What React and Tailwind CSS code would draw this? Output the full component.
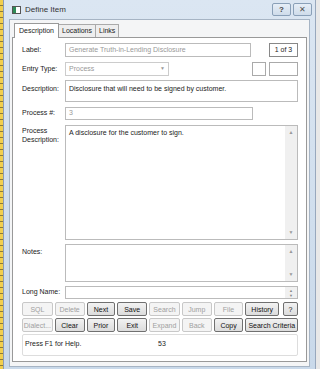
import React from "react";

const font = { fontFamily: '"Liberation Sans", Arial, sans-serif' };

function Btn({ children, enabled, w }) {
  return (
    <div
      className={`h-[14px] flex items-center justify-center border text-[7px] leading-none whitespace-nowrap rounded-[2px] ${
        enabled
          ? "border-[#707070] bg-[linear-gradient(#f2f2f2,#dcdcdc)] text-[#111]"
          : "border-[#c8c8c8] bg-[#f4f4f4] text-[#a0a0a0]"
      } ${w}`}
    >
      {children}
    </div>
  );
}

function ScrollCol({ h }) {
  return (
    <div className={`w-[12px] bg-[#f0f0f0] flex flex-col justify-between items-center text-[5px] text-[#999] py-[3px] ${h}`}>
      <span>▲</span>
      <span>▼</span>
    </div>
  );
}

export default function App() {
  return (
    <div className="w-[320px] h-[369px] flex bg-white overflow-hidden text-[7px] text-[#222] whitespace-nowrap" style={font}>
      <div className="w-[3px] h-full bg-[repeating-linear-gradient(#f2cf4e_0px,#f2cf4e_5px,#8a7a3a_5px,#8a7a3a_6px)]" />
      <div className="w-[313px] h-full flex flex-col bg-[linear-gradient(#dbe6f2,#c9d9ea)] border-l border-[#8c9bb0] border-r border-r-[#98a8bd]">
        {/* Title bar */}
        <div className="h-[19px] flex items-center pl-[8px] pr-[3px] shrink-0">
          <div className="w-[9px] h-[8px] border border-[#555] bg-white flex mr-[4px]">
            <div className="w-[3px] h-full bg-[#2e8b57]" />
          </div>
          <span className="text-[8px] text-[#333]">Define Item</span>
          <div className="ml-auto flex gap-[2px]">
            <div className="w-[19px] h-[13px] border border-[#8aa0b8] rounded-[2px] bg-[linear-gradient(#e6eef7,#cfdcea)] flex items-center justify-center text-[8px] text-[#444] font-bold">?</div>
            <div className="w-[19px] h-[13px] border border-[#8aa0b8] rounded-[2px] bg-[linear-gradient(#e6eef7,#cfdcea)] flex items-center justify-center text-[8px] text-[#555]">✕</div>
          </div>
        </div>
        {/* Client area */}
        <div className="flex-1 mx-[5px] mb-[6px] bg-[#f4f5f6] border border-[#a6b4c4] flex flex-col px-[2px] pt-[2px]">
          {/* Tabs */}
          <div className="flex items-end h-[15px] pl-[2px]">
            <div className="h-[15px] px-[4px] bg-white border border-[#999] border-b-0 flex items-center relative z-10 -mb-px">Description</div>
            <div className="h-[13px] px-[3px] bg-[#eeeeee] border border-[#aaa] border-l-0 border-b-0 flex items-center">Locations</div>
            <div className="h-[13px] px-[3px] bg-[#eeeeee] border border-[#aaa] border-l-0 border-b-0 flex items-center">Links</div>
          </div>
          <div className="flex-1 bg-white border border-[#999] mb-[4px] flex flex-col pl-[9px] pr-[8px] pt-[5px]">
            {/* Label */}
            <div className="flex items-center h-[14px]">
              <span className="w-[43px]">Label:</span>
              <div className="w-[186px] h-[14px] border border-[#bbb] flex items-center px-[3px] text-[#999]">Generate Truth-in-Lending Disclosure</div>
              <div className="ml-auto w-[29px] h-[14px] border border-[#888] flex items-center justify-center text-[#222]">1 of 3</div>
            </div>
            {/* Entry Type */}
            <div className="flex items-center h-[14px] mt-[5px]">
              <span className="w-[43px]">Entry Type:</span>
              <div className="w-[104px] h-[14px] border border-[#ccc] flex items-center px-[3px] text-[#999]">
                <span>Process</span>
                <span className="ml-auto text-[5px]">▼</span>
              </div>
              <div className="ml-auto w-[14px] h-[14px] border border-[#aaa]" />
              <div className="ml-[3px] w-[29px] h-[14px] border border-[#aaa]" />
            </div>
            {/* Description */}
            <div className="flex items-start mt-[4px]">
              <span className="w-[43px] pt-[4px]">Description:</span>
              <div className="flex-1 h-[22px] border border-[#bbb] px-[3px] pt-[3px]">Disclosure that will need to be signed by customer.</div>
            </div>
            {/* Process # */}
            <div className="flex items-center h-[13px] mt-[5px]">
              <span className="w-[43px]">Process #:</span>
              <div className="w-[188px] h-[13px] border border-[#bbb] flex items-center px-[3px] text-[#999]">3</div>
            </div>
            {/* Process Description */}
            <div className="flex items-start mt-[5px]">
              <span className="w-[43px] leading-[9px] pt-[1px] whitespace-normal">Process Description:</span>
              <div className="flex-1 h-[115px] border border-[#bbb] flex">
                <div className="flex-1 px-[3px] pt-[2px]">A disclosure for the customer to sign.</div>
                <ScrollCol h="h-full" />
              </div>
            </div>
            {/* Notes */}
            <div className="flex items-start mt-[4px]">
              <span className="w-[43px] pt-[3px]">Notes:</span>
              <div className="flex-1 h-[38px] border border-[#bbb] flex">
                <div className="flex-1" />
                <ScrollCol h="h-full" />
              </div>
            </div>
            {/* Long Name */}
            <div className="flex items-center h-[13px] mt-[4px]">
              <span className="w-[43px]">Long Name:</span>
              <div className="flex-1 h-[13px] border border-[#bbb] flex">
                <div className="flex-1" />
                <div className="w-[12px] bg-[#f0f0f0] flex flex-col items-center justify-center text-[4px] text-[#888] leading-[5px]">
                  <span>▲</span>
                  <span>▼</span>
                </div>
              </div>
            </div>
            {/* Buttons */}
            <div className="flex mt-[3px] gap-[2px]">
              <Btn w="w-[31px]">SQL</Btn>
              <Btn w="w-[30px]">Delete</Btn>
              <Btn enabled w="w-[29px]">Next</Btn>
              <Btn enabled w="w-[30px]">Save</Btn>
              <Btn w="w-[31px]">Search</Btn>
              <Btn w="w-[30px]">Jump</Btn>
              <Btn w="w-[30px]">File</Btn>
              <Btn enabled w="w-[34px]">History</Btn>
              <Btn enabled w="w-[15px] ml-[2px]">?</Btn>
            </div>
            <div className="flex mt-[2px] gap-[2px]">
              <Btn w="w-[31px]">Dialect...</Btn>
              <Btn enabled w="w-[30px]">Clear</Btn>
              <Btn enabled w="w-[29px]">Prior</Btn>
              <Btn enabled w="w-[30px]">Exit</Btn>
              <Btn w="w-[31px]">Expand</Btn>
              <Btn w="w-[30px]">Back</Btn>
              <Btn enabled w="w-[30px]">Copy</Btn>
              <Btn enabled w="w-[53px]">Search Criteria</Btn>
            </div>
            {/* Status */}
            <div className="h-[22px] mt-[2px] mb-[5px] border border-[#ddd] rounded-[2px] flex items-start pt-[4px] px-[2px]">
              <span className="w-[133px]">Press F1 for Help.</span>
              <span>53</span>
            </div>
          </div>
        </div>
      </div>
      <div className="flex-1 bg-[#e8e8e8]" />
    </div>
  );
}
